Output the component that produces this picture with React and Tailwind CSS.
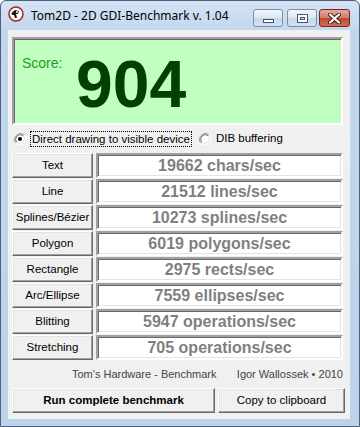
import React from "react";

const rows = [
  ["Text", "19662 chars/sec"],
  ["Line", "21512 lines/sec"],
  ["Splines/Bézier", "10273 splines/sec"],
  ["Polygon", "6019 polygons/sec"],
  ["Rectangle", "2975 rects/sec"],
  ["Arc/Ellipse", "7559 ellipses/sec"],
  ["Blitting", "5947 operations/sec"],
  ["Stretching", "705 operations/sec"],
];

function Radio({ checked }) {
  return (
    <svg width="12" height="12" viewBox="0 0 12 12" className="shrink-0">
      <path d="M10.2 1.8 A6 6 0 0 0 1.8 10.2" fill="none" stroke="#a0a0a0" strokeWidth="1" />
      <path d="M1.8 10.2 A6 6 0 0 0 10.2 1.8" fill="none" stroke="#ffffff" strokeWidth="1" />
      <circle cx="6" cy="6" r="4.5" fill="#ffffff" />
      <path d="M9.3 2.7 A4.7 4.7 0 0 0 2.7 9.3" fill="none" stroke="#696969" strokeWidth="1" />
      <path d="M2.7 9.3 A4.7 4.7 0 0 0 9.3 2.7" fill="none" stroke="#e3e3e3" strokeWidth="1" />
      {checked && <circle cx="6" cy="6" r="2" fill="#000000" />}
    </svg>
  );
}

function RaisedButton({ className, children }) {
  return (
    <div
      className={
        "flex items-center justify-center bg-[#f0f0f0] border border-t-white border-l-white border-r-[#696969] border-b-[#696969] shadow-[inset_-1px_-1px_0_#a0a0a0,inset_1px_1px_0_#e3e3e3] text-black " +
        className
      }
    >
      {children}
    </div>
  );
}

export default function App() {
  return (
    <div className="w-[360px] h-[427px] bg-white font-['Liberation_Sans',Arial,sans-serif]">
      <div className="w-[360px] h-[427px] flex flex-col rounded-t-[6px] border border-[#4f6178] bg-[linear-gradient(to_bottom,#d4e3f4,#c2d7ee_30px,#bcd3eb)]">
        {/* title bar */}
        <div className="h-[29px] flex items-start shrink-0">
          <svg width="16" height="16" viewBox="0 0 16 16" className="ml-[7px] mt-[5px] shrink-0">
            <circle cx="8" cy="8" r="7" fill="#ffffff" stroke="#b02020" strokeWidth="1.5" />
            <path d="M3.5 7 L7 4 L11 5 L10 8 L8 8 L9 12 L7 12 L6 9 L4 9 Z" fill="#1a1a1a" />
            <circle cx="9" cy="6" r="1" fill="#ffffff" />
          </svg>
          <div className="ml-[7px] mt-[7px] text-[12px] leading-[15px] text-black font-['Noto_Sans','Open_Sans',sans-serif] whitespace-nowrap">
            Tom2D - 2D GDI-Benchmark v. 1.04
          </div>
          <div className="ml-auto mr-[9px] mt-[8px] flex">
            <div className="w-[30px] h-[18px] rounded-[3px] border border-[#7b8ea6] bg-[linear-gradient(to_bottom,#f2f6fb,#dbe6f3_50%,#c6d7eb_51%,#d3e1f0)] flex items-end justify-center pb-[3px]">
              <div className="w-[11px] h-[4px] bg-white border border-[#45566b]" />
            </div>
            <div className="ml-[4px] w-[30px] h-[18px] rounded-[3px] border border-[#7b8ea6] bg-[linear-gradient(to_bottom,#f2f6fb,#dbe6f3_50%,#c6d7eb_51%,#d3e1f0)] flex items-center justify-center">
              <div className="w-[11px] h-[9px] bg-white border border-[#45566b] flex items-center justify-center">
                <div className="w-[5px] h-[3px] border border-[#45566b] bg-[#d8e2ee]" />
              </div>
            </div>
            <div className="ml-[2px] w-[31px] h-[18px] rounded-[3px] border border-[#6d2a22] bg-[linear-gradient(to_bottom,#e9a99c,#d47a68_50%,#c04a34_51%,#d46a50)] flex items-center justify-center">
              <svg width="13" height="11" viewBox="0 0 13 11">
                <path d="M2 1.5 L11 9.5 M11 1.5 L2 9.5" stroke="#3a1a16" strokeWidth="4" strokeLinecap="round" />
                <path d="M2 1.5 L11 9.5 M11 1.5 L2 9.5" stroke="#ffffff" strokeWidth="2.2" strokeLinecap="round" />
              </svg>
            </div>
          </div>
        </div>

        {/* client area */}
        <div className="ml-[7px] w-[342px] h-[389px] bg-[#f0f0f0] flex flex-col pl-[4px] pt-[7px] shrink-0">
          {/* score panel */}
          <div className="w-[331px] h-[88px] border-2 border-t-[#a0a0a0] border-l-[#a0a0a0] border-r-white border-b-white shadow-[inset_1px_1px_0_#696969] bg-[#c0ffc0] flex items-start">
            <div className="w-[62px] pl-[8px] mt-[16px] text-[14px] leading-[16px] text-[#1f9b1f]">Score:</div>
            <div className="mt-[12px] text-[66px] leading-none font-bold text-[#004000]">904</div>
          </div>

          {/* radio row */}
          <div className="mt-[5px] h-[18px] flex items-center text-[11.5px] text-black">
            <div className="ml-[2px]">
              <Radio checked />
            </div>
            <div className="ml-[4px] border border-dotted border-black px-[1px] leading-[14px] whitespace-nowrap">
              Direct drawing to visible device
            </div>
            <div className="ml-[7px]">
              <Radio />
            </div>
            <div className="ml-[5px] whitespace-nowrap">DIB buffering</div>
          </div>

          {/* results */}
          <div className="mt-[5px] flex flex-col gap-[1px]">
            {rows.map(([label, value]) => (
              <div key={label} className="flex h-[25px]">
                <RaisedButton className="w-[81px] h-[25px] text-[11.5px]">{label}</RaisedButton>
                <div className="ml-[3px] w-[247px] h-[25px] border-2 border-t-[#a0a0a0] border-l-[#a0a0a0] border-r-white border-b-white shadow-[inset_1px_1px_0_#696969,inset_-1px_-1px_0_#e3e3e3] bg-white flex items-center justify-center text-[16px] font-bold text-[#7f7f7f] whitespace-nowrap">
                  {value}
                </div>
              </div>
            ))}
          </div>

          {/* footer */}
          <div className="mt-[6px] h-[16px] flex items-center text-[11px] text-[#444444] whitespace-nowrap">
            <span className="ml-[60px]">Tom's Hardware - Benchmark</span>
            <span className="ml-auto mr-[7px]">Igor Wallossek • 2010</span>
          </div>

          {/* bottom buttons */}
          <div className="mt-[6px] flex">
            <RaisedButton className="w-[203px] h-[25px] text-[11.5px] font-bold">Run complete benchmark</RaisedButton>
            <RaisedButton className="ml-[3px] w-[127px] h-[25px] text-[11.5px]">Copy to clipboard</RaisedButton>
          </div>
        </div>
      </div>
    </div>
  );
}
